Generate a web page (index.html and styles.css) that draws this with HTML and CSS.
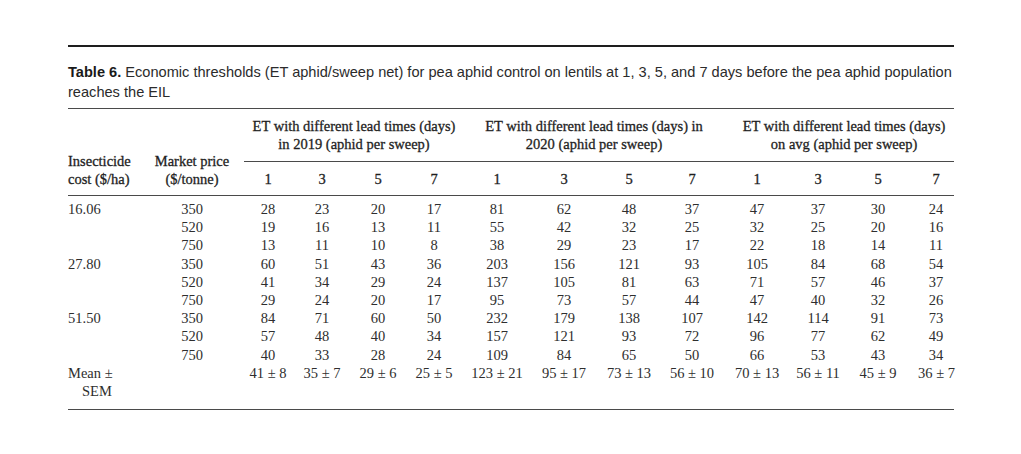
FILE: index.html
```html
<!DOCTYPE html>
<html lang="en">
<head>
<meta charset="utf-8">
<title>Table 6</title>
<link rel="stylesheet" href="styles.css">
</head>
<body>
<div class="page">
  <div class="block">
    <p class="caption"><b>Table 6.</b> Economic thresholds (ET aphid/sweep net) for pea aphid control on lentils at 1, 3, 5, and 7 days before the pea aphid population reaches the EIL</p>
    <table class="et">
      <colgroup>
        <col class="c0"><col class="c1">
        <col class="w48"><col class="w60"><col class="w52"><col class="w60">
        <col class="w66"><col class="w68"><col class="w62"><col class="w64">
        <col class="w66"><col class="w56"><col class="w64"><col class="w44">
      </colgroup>
      <thead>
        <tr class="grp">
          <th rowspan="2" class="left stub">Insecticide<br>cost ($/ha)</th>
          <th rowspan="2" class="stub">Market price<br>($/tonne)</th>
          <th colspan="4" class="group">ET with different lead times (days)<br>in 2019 (aphid per sweep)</th>
          <th colspan="4" class="group">ET with different lead times (days) in<br>2020 (aphid per sweep)</th>
          <th colspan="4" class="group avg">ET with different lead times (days)<br>on avg (aphid per sweep)</th>
        </tr>
        <tr class="days">
          <th>1</th><th>3</th><th>5</th><th>7</th>
          <th>1</th><th>3</th><th>5</th><th>7</th>
          <th>1</th><th>3</th><th>5</th><th class="last">7</th>
        </tr>
      </thead>
      <tbody>
        <tr class="first"><td class="left">16.06</td><td>350</td><td>28</td><td>23</td><td>20</td><td>17</td><td>81</td><td>62</td><td>48</td><td>37</td><td>47</td><td>37</td><td>30</td><td class="last">24</td></tr>
        <tr><td class="left"></td><td>520</td><td>19</td><td>16</td><td>13</td><td>11</td><td>55</td><td>42</td><td>32</td><td>25</td><td>32</td><td>25</td><td>20</td><td class="last">16</td></tr>
        <tr><td class="left"></td><td>750</td><td>13</td><td>11</td><td>10</td><td>8</td><td>38</td><td>29</td><td>23</td><td>17</td><td>22</td><td>18</td><td>14</td><td class="last">11</td></tr>
        <tr><td class="left">27.80</td><td>350</td><td>60</td><td>51</td><td>43</td><td>36</td><td>203</td><td>156</td><td>121</td><td>93</td><td>105</td><td>84</td><td>68</td><td class="last">54</td></tr>
        <tr><td class="left"></td><td>520</td><td>41</td><td>34</td><td>29</td><td>24</td><td>137</td><td>105</td><td>81</td><td>63</td><td>71</td><td>57</td><td>46</td><td class="last">37</td></tr>
        <tr><td class="left"></td><td>750</td><td>29</td><td>24</td><td>20</td><td>17</td><td>95</td><td>73</td><td>57</td><td>44</td><td>47</td><td>40</td><td>32</td><td class="last">26</td></tr>
        <tr><td class="left">51.50</td><td>350</td><td>84</td><td>71</td><td>60</td><td>50</td><td>232</td><td>179</td><td>138</td><td>107</td><td>142</td><td>114</td><td>91</td><td class="last">73</td></tr>
        <tr><td class="left"></td><td>520</td><td>57</td><td>48</td><td>40</td><td>34</td><td>157</td><td>121</td><td>93</td><td>72</td><td>96</td><td>77</td><td>62</td><td class="last">49</td></tr>
        <tr><td class="left"></td><td>750</td><td>40</td><td>33</td><td>28</td><td>24</td><td>109</td><td>84</td><td>65</td><td>50</td><td>66</td><td>53</td><td>43</td><td class="last">34</td></tr>
        <tr class="mean"><td class="left hang">Mean ± SEM</td><td></td><td>41 ± 8</td><td>35 ± 7</td><td>29 ± 6</td><td>25 ± 5</td><td>123 ± 21</td><td>95 ± 17</td><td>73 ± 13</td><td>56 ± 10</td><td>70 ± 13</td><td>56 ± 11</td><td>45 ± 9</td><td class="last">36 ± 7</td></tr>
      </tbody>
    </table>
  </div>
</div>
</body>
</html>
```
FILE: styles.css
```css
html, body {
  margin: 0;
  padding: 0;
  background: #ffffff;
}

.page {
  padding: 45px 0 0 68px;
}

.block {
  width: 886px;
  border-top: 2px solid #1e1e1e;
}

.caption {
  margin: 15px 0 6px 0;
  font-family: "Liberation Sans", Arial, sans-serif;
  font-size: 14.6px;
  line-height: 20px;
  color: #2b2b2b;
}

.caption b {
  font-weight: bold;
  color: #1a1a1a;
}

.et {
  width: 886px;
  table-layout: fixed;
  border-collapse: collapse;
  border-spacing: 0;
  font-family: "Liberation Serif", "Times New Roman", serif;
  font-size: 14.5px;
  color: #2e2e2e;
  border-top: 1px solid #4a4a4a;
  border-bottom: 1px solid #4a4a4a;
}

.c0 { width: 72px; }
.c1 { width: 104px; }
.w44 { width: 44px; }
.w48 { width: 48px; }
.w52 { width: 52px; }
.w56 { width: 56px; }
.w60 { width: 60px; }
.w62 { width: 62px; }
.w64 { width: 64px; }
.w66 { width: 66px; }
.w68 { width: 68px; }

.et th,
.et td {
  padding: 0;
  text-align: center;
  white-space: nowrap;
  line-height: 18.2px;
}

.et th {
  font-weight: normal;
  color: #1f1f1f;
  -webkit-text-stroke: 0.3px #1f1f1f;
}

.et .left {
  text-align: left;
}

.et thead {
  border-bottom: 1px solid #4a4a4a;
}

.grp th {
  padding-top: 8px;
  padding-bottom: 8px;
  line-height: 18px;
  vertical-align: top;
}

.grp .stub {
  vertical-align: bottom;
  padding-bottom: 7px;
  padding-top: 0;
}

.grp .group {
  border-bottom: 1px solid #4a4a4a;
}

.grp .avg {
  padding-left: 10px;
}

.days th {
  padding-top: 8px;
  padding-bottom: 7px;
  line-height: 18px;
}

.et .last {
  padding-left: 8px;
}

.first td {
  padding-top: 4px;
}

.mean td {
  vertical-align: top;
  padding-bottom: 9px;
}

.mean .hang {
  white-space: normal;
  padding-left: 14px;
  text-indent: -14px;
}
```
